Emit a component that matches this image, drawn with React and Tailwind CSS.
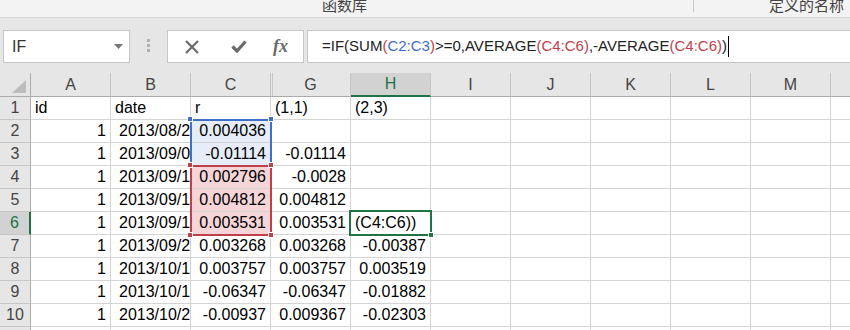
import React from "react";

const FONT = { fontFamily: '"Liberation Sans", Arial, sans-serif' };
const CJK = { fontFamily: '"Noto Sans CJK SC", "Liberation Sans", sans-serif' };

const colLetters = ["A", "B", "C", "G", "H", "I", "J", "K", "L", "M", ""];

const rows = [
  ["id", "date", "r", "(1,1)", "(2,3)"],
  ["1", "2013/08/27", "0.004036", "", ""],
  ["1", "2013/09/03", "-0.01114", "-0.01114", ""],
  ["1", "2013/09/10", "0.002796", "-0.0028", ""],
  ["1", "2013/09/13", "0.004812", "0.004812", ""],
  ["1", "2013/09/17", "0.003531", "0.003531", "(C4:C6))"],
  ["1", "2013/09/24", "0.003268", "0.003268", "-0.00387"],
  ["1", "2013/10/11", "0.003757", "0.003757", "0.003519"],
  ["1", "2013/10/15", "-0.06347", "-0.06347", "-0.01882"],
  ["1", "2013/10/22", "-0.00937", "0.009367", "-0.02303"],
  ["", "", "", "", ""],
];

const BLUE = "#3f6fc6";
const RED = "#c0404a";

function Formula() {
  const k = "text-[#222]";
  const p = "text-[#c0404a]";
  const b = "text-[#3f6fc6]";
  return (
    <div className="flex items-center whitespace-nowrap text-[15px]" style={FONT}>
      <span className={k}>=IF(SUM</span>
      <span className={p}>(</span>
      <span className={b}>C2:C3</span>
      <span className={p}>)</span>
      <span className={k}>&gt;=0,AVERAGE</span>
      <span className={p}>(C4:C6)</span>
      <span className={k}>,-AVERAGE</span>
      <span className={p}>(C4:C6)</span>
      <span className={k}>)</span>
      <span className="ml-[1px] inline-block h-[21px] w-px bg-black" />
    </div>
  );
}

function Handle({ left, top, color }) {
  return (
    <div
      className="absolute h-[6px] w-[6px] border border-white"
      style={{ left, top, backgroundColor: color }}
    />
  );
}

export default function App() {
  return (
    <div className="relative h-[330px] w-[850px] overflow-hidden bg-white" style={FONT}>
      {/* ribbon strip */}
      <div className="relative h-[18px] border-b border-[#d6d6d6] bg-[#f3f3f3] overflow-hidden">
        <div className="absolute left-[322px] top-[-5px] text-[15px] leading-[20px] text-[#444]" style={CJK}>
          函数库
        </div>
        <div className="absolute left-[693px] top-0 h-[12px] w-px bg-[#c8c8c8]" />
        <div className="absolute left-[769px] top-[-5px] text-[15px] leading-[20px] text-[#444]" style={CJK}>
          定义的名称
        </div>
      </div>

      {/* formula bar */}
      <div className="flex h-[55px] items-start bg-[#e6e6e6] pt-[12px]">
        <div className="ml-[3px] flex h-[33px] w-[127px] items-center justify-between border border-[#c6c6c6] bg-white pl-[8px] pr-[6px]">
          <span className="text-[16px] text-[#333]">IF</span>
          <svg width="9" height="5" viewBox="0 0 9 5">
            <path d="M0 0 L9 0 L4.5 5 Z" fill="#777" />
          </svg>
        </div>
        <div className="ml-[17px] mt-[9px] flex flex-col gap-[2px]">
          <div className="h-[3px] w-[3px] bg-[#b0b0b0]" />
          <div className="h-[3px] w-[3px] bg-[#b0b0b0]" />
          <div className="h-[3px] w-[3px] bg-[#b0b0b0]" />
        </div>
        <div className="ml-[17px] flex h-[33px] w-[137px] items-center border border-[#c6c6c6] bg-white">
          <svg className="ml-[17px]" width="14" height="14" viewBox="0 0 14 14">
            <path d="M1 1 L13 13 M13 1 L1 13" stroke="#6a6a6a" strokeWidth="2.2" />
          </svg>
          <svg className="ml-[32px]" width="16" height="13" viewBox="0 0 16 13">
            <path d="M1.5 6.5 L6 11 L14.5 1.5" stroke="#6a6a6a" strokeWidth="3.2" fill="none" />
          </svg>
          <span
            className="ml-[26px] text-[18px] font-bold italic text-[#6a6a6a]"
            style={{ fontFamily: '"Liberation Serif", "Times New Roman", serif' }}
          >
            fx
          </span>
        </div>
        <div className="ml-[3px] flex h-[33px] flex-1 items-center border border-r-0 border-[#c6c6c6] bg-white pl-[14px]">
          <Formula />
        </div>
      </div>

      {/* sheet */}
      <div className="relative">
        <div className="grid grid-cols-[31px_repeat(11,80px)] text-[16px]">
          {/* header row */}
          <div className="relative h-[24px] border-r border-b border-[#ababab] bg-[#e6e6e6]">
            <svg className="absolute left-[12px] top-[7px]" width="14" height="13" viewBox="0 0 14 13">
              <path d="M14 0 L14 13 L0 13 Z" fill="#bdbdbd" />
            </svg>
          </div>
          {colLetters.map((c, i) => {
            const sel = c === "H";
            const isG = c === "G";
            return (
              <div
                key={i}
                className={
                  "relative flex h-[24px] items-center justify-center border-r border-r-[#c6c6c6] " +
                  (sel
                    ? "border-b-2 border-b-[#217346] bg-[#d2d2d2] text-[#217346]"
                    : "border-b border-b-[#ababab] bg-[#e6e6e6] text-[#444]") +
                  (isG
                    ? " before:absolute before:left-[1px] before:top-0 before:bottom-0 before:w-px before:bg-[#c6c6c6]"
                    : "")
                }
              >
                {c}
              </div>
            );
          })}

          {rows.map((r, ri) => {
            const rowNum = ri + 1;
            const selRow = rowNum === 6;
            return (
              <React.Fragment key={ri}>
                <div
                  className={
                    "flex h-[23px] items-center justify-center border-b border-b-[#c6c6c6] " +
                    (selRow
                      ? "border-r-2 border-r-[#217346] bg-[#d2d2d2] text-[#217346]"
                      : "border-r border-r-[#ababab] bg-[#e6e6e6] text-[#444]")
                  }
                >
                  {rowNum}
                </div>
                {colLetters.map((c, ci) => {
                  const v = ci < 5 ? r[ci] : "";
                  const isHeaderRow = ri === 0;
                  const numeric = !isHeaderRow && ci !== 1 && v !== "" && v !== "(C4:C6))";
                  let bg = "";
                  if (c === "C" && (rowNum === 2 || rowNum === 3)) bg = " bg-[#e6edf8]";
                  if (c === "C" && rowNum >= 4 && rowNum <= 6) bg = " bg-[#f5d5d8]";
                  const align = numeric ? " justify-end pr-[4px]" : ci === 1 && !isHeaderRow ? " pl-[8px]" : " pl-[4px]";
                  return (
                    <div
                      key={ci}
                      className={
                        "flex h-[23px] items-center overflow-hidden whitespace-nowrap border-r border-b border-[#d4d4d4] text-black" +
                        align +
                        bg
                      }
                    >
                      {v}
                    </div>
                  );
                })}
              </React.Fragment>
            );
          })}
        </div>

        {/* overlays: C2:C3 blue */}
        <div
          className="absolute border-2"
          style={{ left: 190, top: 46, width: 82, height: 48, borderColor: BLUE }}
        />
        <Handle left={187} top={43} color={BLUE} />
        <Handle left={268} top={43} color={BLUE} />
        {/* C4:C6 red */}
        <div
          className="absolute border-2"
          style={{ left: 190, top: 92, width: 82, height: 71, borderColor: RED }}
        />
        <Handle left={187} top={89} color={RED} />
        <Handle left={268} top={89} color={RED} />
        <Handle left={187} top={159} color={RED} />
        <Handle left={268} top={159} color={RED} />
        {/* H6 active cell */}
        <div
          className="absolute border-2 border-[#217346]"
          style={{ left: 349, top: 137, width: 83, height: 26 }}
        />
        <div
          className="absolute h-[6px] w-[6px] border border-white bg-[#217346]"
          style={{ left: 428, top: 159 }}
        />
      </div>
    </div>
  );
}
